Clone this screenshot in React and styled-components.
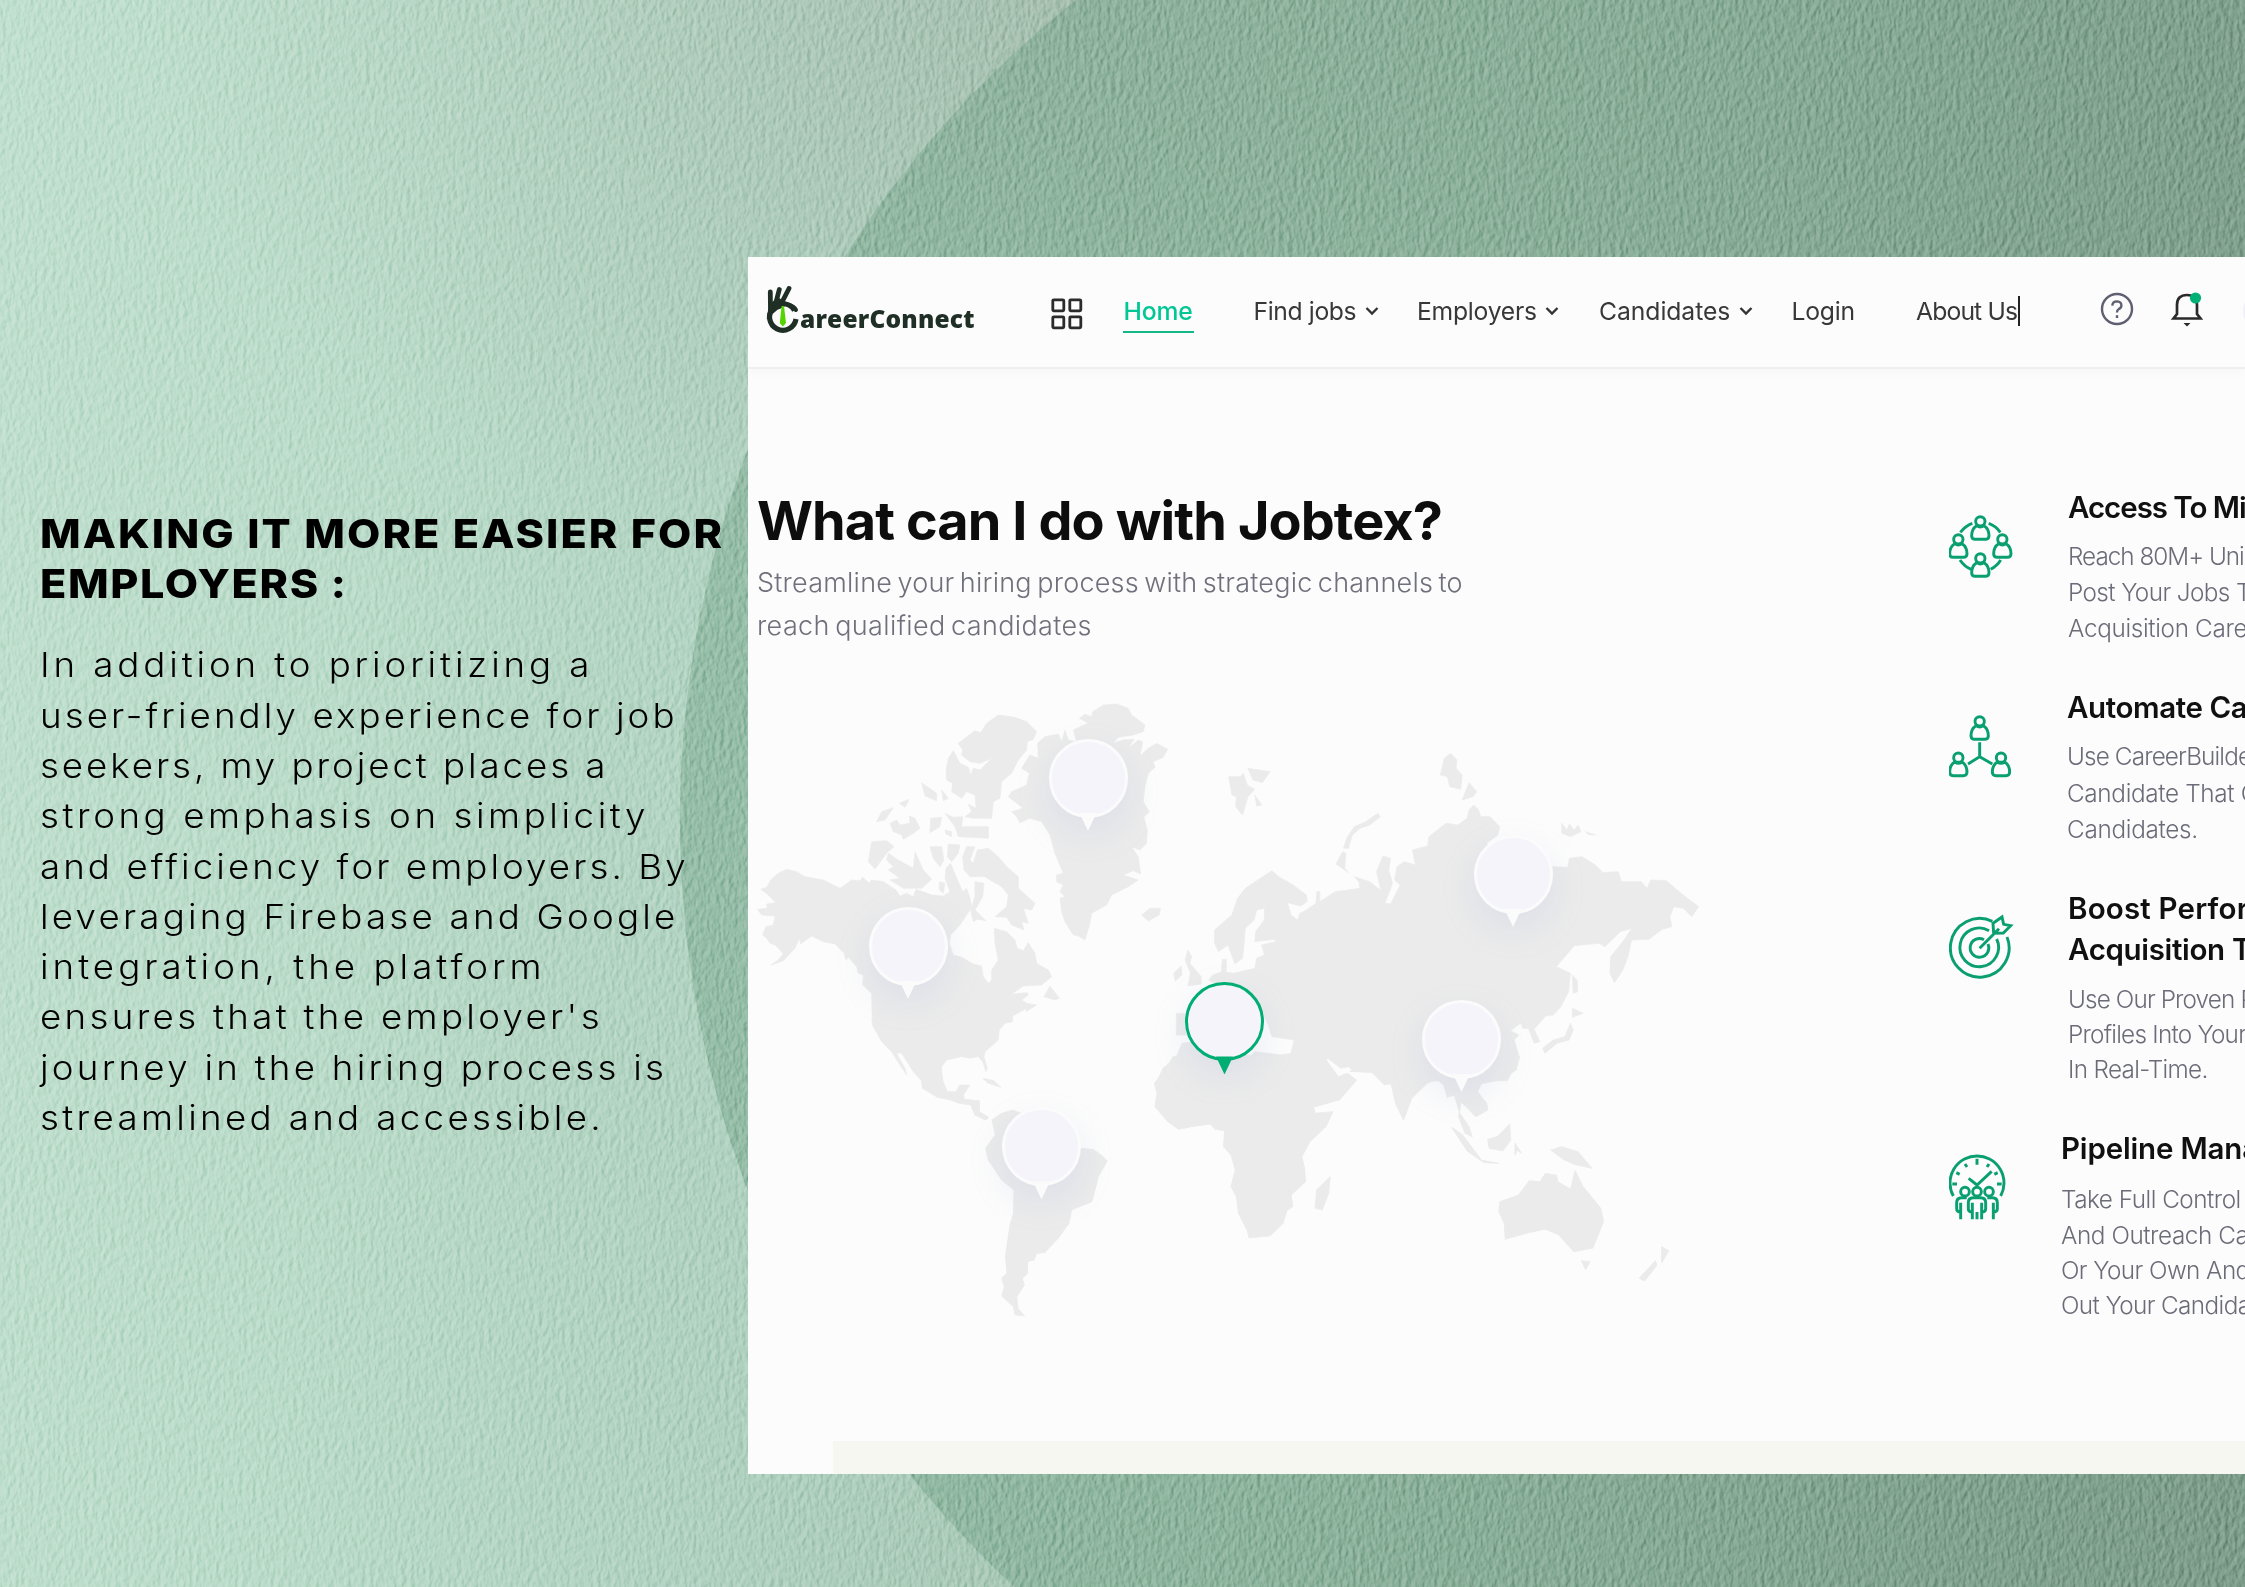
import React, { useLayoutEffect, useRef, useState } from "react";
import styled, { createGlobalStyle } from "styled-components";

const GlobalStyle = createGlobalStyle`
  *, *::before, *::after { box-sizing: border-box; }
  html, body { margin: 0; padding: 0; }
  body { overflow: hidden; background: #b4d6c3; }
`;

const sans = `Inter, "Liberation Sans", sans-serif`;
const green = "#00ad73";

/* ---------- page ---------- */

const Page = styled.div`
  position: relative;
  isolation: isolate;
  width: 2245px;
  height: 1587px;
  overflow: hidden;
  display: grid;
  grid-template-columns: 748px 1fr;
  font-family: ${sans};
  background:
    radial-gradient(circle at 1727px 820px,
      rgba(108, 158, 130, 0.42) 0, rgba(108, 158, 130, 0.42) 1046.5px, transparent 1047.5px),
    radial-gradient(900px 600px at 1050px 0px, rgba(150, 160, 148, 0.3), transparent),
    linear-gradient(97deg, #c0dfce 0%, #badbc9 18%, #b0d1c0 36%, #a2c1ae 60%, #8fa698 85%, #889c8f 100%);
`;

const Plaster = styled.svg`
  position: absolute;
  inset: 0;
  z-index: -1;
  width: 100%;
  height: 100%;
  mix-blend-mode: soft-light;
  opacity: 0.5;
`;

const Pitch = styled.section`
  padding: 508.6px 0 0 40px;
`;

const PitchTitle = styled.h1`
  margin: 0 0 31px;
  font-size: 40.3px;
  line-height: 50.3px;
  font-weight: 800;
  color: #000;
  transform: scaleX(1.07);
  transform-origin: left;
`;

const PitchText = styled.p`
  margin: 0;
  font-size: 34px;
  line-height: 50.33px;
  font-weight: 340;
  color: #000;
  transform: scaleX(1.08);
  transform-origin: left;
`;

const LineBox = styled.span`
  display: block;
  white-space: nowrap;
`;

const Ink = styled.span`
  display: inline-block;
`;

/* Justifies one line to a fixed measure by adjusting its tracking. */
function Line({ width, children }) {
  const ref = useRef(null);
  const [tracking, setTracking] = useState(0);
  useLayoutEffect(() => {
    const el = ref.current;
    const natural = el.offsetWidth;
    setTracking((width - natural) / Math.max(1, children.length - 1));
  }, [width, children]);
  return (
    <LineBox>
      <Ink ref={ref} style={{ letterSpacing: `${tracking}px` }}>{children}</Ink>
    </LineBox>
  );
}

/* ---------- window ---------- */

const Window = styled.main`
  margin-top: 257px;
  height: 1217px;
  background: #fcfcfc;
  overflow: hidden;
  display: flex;
  flex-direction: column;
`;

const Header = styled.header`
  flex: none;
  height: 112px;
  padding: 0 0 3px 19px;
  display: flex;
  align-items: center;
  border-bottom: 2px solid #efefef;
  box-shadow: 0 4px 10px rgba(0, 0, 0, 0.025);
`;

const Logo = styled.div`
  display: flex;
  width: 208px;
  height: 50px;
  flex: none;
  margin: -1px 0 0 -1px;
`;

const LogoMark = styled.svg`
  width: 34px;
  height: 50px;
  flex: none;
`;

const LogoText = styled.div`
  padding-top: 16px;
  font: 800 24.5px/36px "Open Sans", "Noto Sans", sans-serif;
  color: #1f2f25;
`;

const GridIcon = styled.svg`
  width: 32px;
  height: 32px;
  flex: none;
  margin: 7px 0 0 77px;
`;

const NavItem = styled.a`
  flex: none;
  position: relative;
  width: ${(p) => p.$w}px;
  margin-left: ${(p) => p.$gap}px;
  font-size: 24.7px;
  line-height: 30px;
  font-weight: ${(p) => (p.$active ? 500 : 400)};
  color: ${(p) => (p.$active ? "#00c795" : "#383838")};
  &::after {
    content: "";
    display: ${(p) => (p.$active ? "block" : "none")};
    position: absolute;
    left: -0.5px;
    right: -0.5px;
    top: 35px;
    height: 2.4px;
    background: #12b886;
  }
`;

const Chevron = styled.svg`
  flex: none;
  width: 14px;
  height: 10px;
  margin: 1px 0 0 8px;
`;

const Caret = styled.i`
  width: 2px;
  height: 30px;
  background: #222;
  flex: none;
`;

const HelpIcon = styled.svg`
  flex: none;
  width: 34px;
  height: 34px;
  margin: -4px 0 0 80px;
`;

const BellIcon = styled.svg`
  flex: none;
  width: 34px;
  height: 40px;
  margin: -3px 0 0 36px;
`;

const Avatar = styled.div`
  flex: none;
  width: 40px;
  height: 40px;
  margin-left: 38.5px;
  border-radius: 50%;
  background: #f1f0f9;
`;

const Body = styled.div`
  flex: 1;
  display: flex;
  min-height: 0;
`;

const Story = styled.section`
  flex: none;
  width: 1201px;
  padding-top: 119.7px;
`;

const Title = styled.h2`
  margin: 0 0 9.5px 9px;
  font-size: 54px;
  line-height: 64px;
  font-weight: 660;
  color: #0d0d0d;
`;

const Lead = styled.p`
  margin: 0 0 42.6px 9px;
  font-size: 27px;
  line-height: 42.6px;
  font-weight: 360;
  word-spacing: -2.5px;
  color: #70707c;
`;

const MapBoard = styled.div`
  position: relative;
  width: 980px;
  height: 640px;
`;

const MapShape = styled.svg`
  display: block;
  width: 980px;
  height: 640px;
  fill: #ebebeb;
  stroke: #ebebeb;
  stroke-width: 2;
  stroke-linejoin: round;
`;

const PinBox = styled.div`
  position: absolute;
  left: ${(p) => p.$x - 39.5}px;
  top: ${(p) => p.$y - 39}px;
  width: 79px;
  height: 79px;
  border-radius: 50%;
  background: #f5f4fb;
  border: ${(p) => (p.$active ? "3.5px solid " + green : "3.5px solid #fbfbfc")};
  box-shadow: 0 14px 34px rgba(155, 170, 220, 0.18);
  &::after {
    content: "";
    position: absolute;
    left: 50%;
    top: 71px;
    width: 17px;
    height: 18px;
    margin-left: -8.5px;
    background: ${(p) => (p.$active ? green : "#fbfbfc")};
    clip-path: polygon(0 0, 100% 0, 80% 40%, 50% 100%, 20% 40%);
  }
`;

const Features = styled.section`
  flex: 1;
  min-width: 0;
  overflow: hidden;
  padding-top: 117.6px;
`;

const Feature = styled.article`
  display: flex;
  gap: ${(p) => p.$gap}px;
  margin-bottom: 40.8px;
`;

const FeatureIcon = styled.svg`
  flex: none;
  width: ${(p) => p.$w}px;
  height: 64px;
  margin-top: 28px;
  fill: none;
  stroke: #0a9f70;
  stroke-width: 8.8;
  overflow: visible;
`;

const FeatureTitle = styled.h3`
  margin: 0 0 ${(p) => p.$gap}px;
  font-size: 29.5px;
  line-height: 41px;
  font-weight: 630;
  color: #101010;
`;

const FeatureText = styled.p`
  margin: 0;
  font-size: 24.3px;
  line-height: ${(p) => p.$lh}px;
  font-weight: 360;
  color: #6c6c79;
`;

const FooterStrip = styled.div`
  flex: none;
  height: 33px;
  margin-left: 85px;
  background: #f6f7f1;
`;

/* ---------- drawings ---------- */

const PersonShape = ({ x, y }) => (
  <g transform={`translate(${x} ${y})`}>
    <circle r="14" />
    <path d="M-11 13C-22 20-26 31-26 43Q-26 54-15 54H15Q26 54 26 43C26 31 22 20 11 13Q0 21-11 13" />
  </g>
);

const TeamIcon = () => (
  <FeatureIcon $w={63} viewBox="0 0 189 192">
    <PersonShape x={94} y={19} />
    <PersonShape x={28} y={73} />
    <PersonShape x={160} y={73} />
    <PersonShape x={94} y={130} />
    <path d="M34 52Q50 32 70 25M119 25Q141 33 154 52M33 135Q46 155 67 163M155 135Q145 152 125 163" />
  </FeatureIcon>
);

const NetworkIcon = () => (
  <FeatureIcon $w={62} viewBox="0 0 186 192">
    <PersonShape x={92} y={19} />
    <PersonShape x={28} y={128} />
    <PersonShape x={156} y={128} />
    <path d="M92 82V125L57 147M92 125L130 147" />
  </FeatureIcon>
);

const TargetIcon = () => (
  <FeatureIcon $w={63} viewBox="0 0 189 192">
    <path d="M130 16A88 88 0 1 0 174 63" />
    <path d="M120 44A58 58 0 1 0 143 69" />
    <path d="M105 71A28 28 0 1 0 117 84" />
    <path d="M92 97L150 38M134 52L132 22L159 3L164 25L185 29L163 51Z" />
  </FeatureIcon>
);

const PipelineIcon = () => (
  <FeatureIcon $w={56} viewBox="0 0 168 192">
    <path d="M13 120A81 81 0 1 1 155 120" />
    <path d="M84 8V26M48 24L54 33M120 24L114 33M22 50L32 55M146 50L136 55M10 84H24M144 84H158" />
    <path d="M59 67L84 87L128 46" />
    <circle cx="48" cy="107" r="13" />
    <circle cx="84" cy="107" r="13" />
    <circle cx="120" cy="107" r="13" />
    <path d="M35 190V140M35 168Q23 168 23 158V140Q23 125 38 125H53M133 190V140M133 168Q145 168 145 158V140Q145 125 130 125H115" />
    <path d="M70 190V140M98 190V140M70 168Q58 168 58 158V140Q58 125 73 125H95Q110 125 110 140V158Q110 168 98 168M84 168V190" />
  </FeatureIcon>
);

const northAmerica = [
  "M140 568L115 580L92 600L80 622L62 628L85 645L108 668L80 672L82 685L52 688L65 705L105 708L100 735L78 740L68 765L80 775L90 790L105 795L118 808L130 822L112 842L92 856L130 842L165 805L178 775L182 792L215 768L250 785L285 792L312 820L318 840L325 832L350 860L355 880L370 885L368 915L395 940L397 1035L425 1085L455 1115L470 1140L500 1185L495 1165L475 1130L470 1118L485 1120L520 1175L545 1202L605 1202L605 1160L620 1140L665 1130L690 1135L715 1130L728 1145L738 1175L742 1165L732 1130L735 1115L775 1080L778 1050L795 1030L818 1025L818 1008L860 985L858 995L890 975L860 970L845 960L865 945L862 938L815 943L850 918L905 915L935 890L925 870L890 850L885 820L865 788L850 812L832 805L825 780L800 755L763 745L765 790L775 840L755 870L755 900L745 910L730 890L725 858L700 852L665 832L640 825L628 790L632 765L660 735L690 690L695 680L690 655L680 625L668 635L655 605L640 570L632 550L618 565L615 595L630 635L610 648L575 645L540 632L528 628L520 650L500 640L480 648L468 630L430 605L395 600L388 610L368 592L360 602L335 600L300 625L250 600L195 590L170 575Z",
  "M655 190L705 152L722 158L740 130L775 105L825 112L860 125L890 155L880 178L862 185L860 210L835 240L815 280L785 305L780 355L760 365L755 415L700 415L675 410L695 395L685 372L708 385L705 345L680 335L665 355L635 335L638 310L620 300L618 270L625 235L640 212L660 250L685 262L692 285L700 265L720 270L755 235L720 250L690 245L665 225L668 210Z",
  "M1000 150L1020 140L1045 130L1018 115L1035 103L1055 110L1058 95L1090 75L1130 72L1165 85L1175 105L1215 135L1210 155L1180 165L1135 172L1120 190L1150 180L1182 178L1165 205L1195 180L1208 185L1200 228L1225 205L1250 190L1283 208L1270 232L1240 245L1245 262L1225 280L1215 320L1210 365L1228 395L1212 412L1222 450L1220 490L1200 510L1175 500L1195 530L1202 582L1180 572L1150 585L1195 600L1165 620L1115 645L1100 675L1055 700L1050 730L1035 780L1015 768L1000 765L975 725L965 695L960 655L975 650L960 635L970 615L950 605L950 585L970 580L945 520L930 465L905 425L870 415L840 428L830 410L815 395L850 385L805 350L815 335L860 315L868 280L845 265L870 225L895 235L893 190L915 170L955 162L965 185L975 150L985 180L1010 185Z",
  "M680 500L705 500L690 540L700 550L712 510L745 505L775 530L800 560L835 590L835 625L885 670L875 690L850 685L865 730L845 725L852 750L815 735L800 712L765 710L800 680L805 645L785 620L750 600L735 590L690 590L672 570L668 530Z",
  "M705 605L732 610L728 650L705 690L738 722L712 718L700 725L692 690L705 650Z",
  "M445 520L475 540L520 565L525 515L550 570L575 598L545 625L490 625L450 600L480 595L445 570L460 560L440 540Z",
  "M395 485L440 482L462 500L440 520L405 567L385 545Z",
  "M410 425L425 395L460 383L435 420ZM450 430L470 420L480 435L510 430L508 408L525 415L540 445L520 460L490 478L485 465L460 455ZM478 370L508 358L495 382ZM545 308L590 340L590 362L555 348ZM605 330L625 355L610 362Z",
  "M572 415L605 412L600 440L570 458ZM615 400L640 412L668 410L665 440L745 440L745 475L655 470L645 440ZM615 450L635 455L635 470L618 462ZM570 500L605 500L612 540L600 560L580 535ZM625 492L660 495L655 520L635 545L622 530ZM598 605L615 610L610 640L598 630Z",
  "M1205 705L1230 685L1262 685L1258 705L1225 723ZM930 918L958 955L945 960L912 950Z",
];

const eurasia = [
  "M345 572L362 590L400 615L435 645L437 665L420 678L385 668L395 705L412 720L418 700L435 690L460 670L462 635L470 635L470 665L510 635L575 625L572 605L560 590L600 605L630 632L618 575L635 528L655 535L650 570L660 610L640 670L655 672L680 615L665 600L672 560L690 545L720 555L712 510L752 498L755 470L800 430L830 435L855 415L860 390L872 375L885 390L890 410L915 410L940 440L935 465L905 490L980 560L1080 560L1118 562L1122 535L1155 530L1190 555L1210 578L1250 575L1258 605L1310 605L1325 625L1335 600L1375 602L1425 650L1460 680L1442 710L1420 685L1395 680L1385 710L1390 740L1365 748L1330 778L1285 780L1275 830L1262 870L1240 908L1228 880L1230 830L1265 780L1285 745L1255 755L1215 800L1200 790L1135 797L1088 860L1125 880L1120 935L1100 980L1080 1005L1060 1008L1030 1048L1045 1085L1030 1090L1015 1045L1000 1045L995 1030L968 1052L990 1065L978 1080L992 1135L960 1202L632 1202L610 1178L560 1175L545 1160L525 1165L490 1135L485 1145L520 1202L45 1202L60 1165L95 1130L110 1090L180 1080L240 1125L290 1130L300 1115L370 1125L395 1120L403 1080L345 1070L335 1035L320 1000L180 900L190 885L215 875L245 880L300 865L305 835L325 825L318 795L355 785L350 778L300 785L302 755L325 720L325 685L305 690L298 720L275 745L272 790L268 835L248 852L230 795L205 815L195 790L195 750L240 705L255 655L275 625Z",
  "M95 1000H125L135 1065H95ZM125 810L135 830L130 850L160 890L160 912L125 918L132 880L118 840ZM88 880L108 858L110 885L92 903ZM215 838L226 838L225 875L213 875Z",
  "M232 290L262 290L270 280L280 315L300 328L282 350L268 405L250 380L252 350L240 345ZM282 265L340 275L320 308L295 300ZM300 345L318 375L305 378Z",
  "M622 400L628 410L600 435L575 445L555 465L545 505L532 505L540 475L560 440L590 425ZM530 515L538 520L535 565L545 578L512 552Z",
  "M812 220L828 240L826 265L842 285L838 328L810 320L803 290L785 285L795 235ZM860 308L880 335L870 350L842 360Z",
  "M1102 430L1116 450L1122 432L1134 450L1145 436L1152 455L1125 470L1102 460ZM1165 455L1190 465L1172 464Z",
  "M1130 885L1142 900L1144 935L1132 940ZM1130 985L1158 1000L1130 1012ZM1125 1030L1132 1050L1122 1080L1090 1090L1058 1120L1052 1105L1080 1080L1110 1070Z",
];

const south = [
  "M30 340L40 360L42 385L70 412L90 418L110 430L132 435L140 465L160 480L165 472L148 455L148 422L120 418L118 405L130 375L112 375L105 395L88 395L80 365L78 340ZM155 355L175 362L188 382L165 370Z",
  "M172 480L190 460L210 450L222 458L240 460L335 565L360 568L375 585L387 603L370 650L358 725L320 750L315 790L295 835L270 878L255 880L250 900L238 905L238 940L228 955L232 975L218 1010L220 1045L232 1068L215 1065L212 1040L190 1008L195 980L190 955L200 940L197 890L205 800L212 760L213 690L190 660L165 600L160 565L178 525Z",
  "M510 290L495 330L475 370L480 400L476 440L500 485L520 508L545 500L580 492L588 508L606 512L604 560L618 585L626 630L618 680L628 710L632 760L648 810L652 834L690 828L715 790L722 752L733 740L730 705L757 665L755 625L750 590L765 545L795 500L808 455L775 460L772 442L820 420L852 360L835 340L818 350L795 300L700 285Z",
  "M840 335L880 335L905 375L917 372L925 430L940 480L955 415L985 368L1005 360L1015 375L1022 412L1035 405L1045 460L1062 500L1068 530L1055 520L1043 470L1047 425L1060 445L1075 470L1097 450L1095 430L1078 395L1085 372L1120 360L1150 330L1156 290L1100 250L900 250Z",
  "M1030 502L1050 525L1085 600L1118 610L1090 608L1060 575ZM1138 493L1140 540L1125 573L1100 565L1097 538L1115 530ZM1148 550L1160 580L1152 570L1148 585ZM1215 570L1235 560L1265 575L1292 625L1262 615L1240 600Z",
  "M1130 838L1128 790L1118 755L1120 725L1155 705L1175 662L1195 665L1205 640L1225 645L1228 665L1252 688L1260 632L1275 680L1308 745L1313 785L1293 865L1258 875L1230 825L1205 808L1170 820ZM1272 902L1288 905L1280 928ZM1422 860L1435 872L1422 908ZM1410 903L1413 915L1390 963L1380 955ZM803 650L800 700L788 750L775 745L778 690Z",
];

const pins = [
  { x: 340, y: 88 },
  { x: 160, y: 256 },
  { x: 476.5, y: 331.5, active: true },
  { x: 765, y: 184 },
  { x: 713.5, y: 349 },
  { x: 293.5, y: 456.5 },
];

const WorldMap = () => (
  <MapBoard>
    <MapShape viewBox="748 690 980 640">
      <g transform="translate(740 680) scale(.3333)">
        {northAmerica.map((d) => <path key={d} d={d} />)}
      </g>
      <g transform="translate(1140 680) scale(.38265 .3333)">
        {eurasia.map((d) => <path key={d} d={d} />)}
      </g>
      <g transform="translate(900 960) scale(.5357 .3333)">
        {south.map((d) => <path key={d} d={d} />)}
      </g>
    </MapShape>
    {pins.map((p) => <PinBox key={p.x} $x={p.x} $y={p.y} $active={p.active} />)}
  </MapBoard>
);

const Down = () => (
  <Chevron viewBox="0 0 14 10" fill="none" stroke="#333" strokeWidth="2.4">
    <path d="M1.5 2L7 7.5L12.5 2" />
  </Chevron>
);

const nav = [
  { label: "Home", w: 69.5, gap: 40.5, active: true },
  { label: "Find jobs", w: 103, gap: 60.5, menu: true },
  { label: "Employers", w: 120, gap: 38.5, menu: true },
  { label: "Candidates", w: 131.5, gap: 40, menu: true },
  { label: "Login", w: 63, gap: 39 },
  { label: "About Us", w: 102, gap: 61.5 },
];

const pitch = [
  ["In addition to prioritizing a", 508.5],
  ["user-friendly experience for job", 588],
  ["seekers, my project places a", 524],
  ["strong emphasis on simplicity", 561],
  ["and efficiency for employers. By", 597.5],
  ["leveraging Firebase and Google", 588],
  ["integration, the platform", 464],
  ["ensures that the employer's", 518.5],
  ["journey in the hiring process is", 578],
  ["streamlined and accessible.", 519],
];

const features = [
  {
    Icon: TeamIcon, gap: 56, titleGap: 10.2, lh: 36.2,
    title: [["Access To Mi", 178.5]],
    text: [["Reach 80M+ Uni", 177], ["Post Your Jobs T", 183], ["Acquisition Care", 180]],
  },
  {
    Icon: NetworkIcon, gap: 56, titleGap: 10.2, lh: 36.2,
    title: [["Automate Ca", 181]],
    text: [["Use CareerBuilde", 185], ["Candidate That C", 191], ["Candidates.", 131]],
  },
  {
    Icon: TargetIcon, gap: 56, titleGap: 12, lh: 35.3,
    title: [["Boost Perfor", 180], ["Acquisition T", 183]],
    text: [["Use Our Proven P", 188], ["Profiles Into Your", 179], ["In Real-Time.", 140]],
  },
  {
    Icon: PipelineIcon, gap: 56, titleGap: 13, lh: 35.3,
    title: [["Pipeline Mana", 198]],
    text: [["Take Full Control", 180], ["And Outreach Ca", 188], ["Or Your Own And", 189], ["Out Your Candida", 190]],
  },
];

export default function App() {
  return (
    <Page>
      <GlobalStyle />
      <Plaster aria-hidden="true">
        <filter id="plaster" x="0" y="0" width="100%" height="100%" colorInterpolationFilters="sRGB">
          <feTurbulence type="fractalNoise" baseFrequency="0.22 0.12" numOctaves="3" seed="7" />
          <feDiffuseLighting surfaceScale="1.4" diffuseConstant="1.06" lightingColor="#fff">
            <feDistantLight azimuth="200" elevation="30" />
          </feDiffuseLighting>
        </filter>
        <rect width="100%" height="100%" filter="url(#plaster)" />
      </Plaster>

      <Pitch>
        <PitchTitle>
          <Line width={637}>MAKING IT MORE EASIER FOR</Line>
          <Line width={286}>EMPLOYERS :</Line>
        </PitchTitle>
        <PitchText>
          {pitch.map(([t, w]) => <Line key={t} width={w}>{t}</Line>)}
        </PitchText>
      </Pitch>

      <Window>
        <Header>
          <Logo>
            <LogoMark viewBox="0 0 34 50" fill="none" stroke="#1f2f25" strokeLinecap="round">
              <path d="M28.5 25.5A13.3 13.3 0 1 0 30 34" strokeWidth="5.2" strokeLinecap="butt" />
              <path d="M4.5 26L4.3 7M9 21L13.3 4.5M14 21L23 3.5" strokeWidth="4.8" />
              <path d="M3 30L5 20L12 14L20 19L10 24Z" fill="#1f2f25" strokeWidth="3" />
              <path d="M22 20Q28 21 30 25" strokeWidth="4" />
              <path d="M15.6 21H18L20 38L16.8 41.5L13.8 38Z" fill="#55d400" stroke="none" />
            </LogoMark>
            <LogoText><Line width={175}>areerConnect</Line></LogoText>
          </Logo>
          <GridIcon viewBox="0 0 32 32" fill="none" stroke="#2b2b2b" strokeWidth="2.8">
            <rect x="1.8" y="1.8" width="11" height="11" rx="1" />
            <rect x="18.8" y="1.8" width="11" height="11" rx="1" />
            <rect x="1.8" y="18.8" width="11" height="11" rx="1" />
            <rect x="18.8" y="18.8" width="11" height="11" rx="1" />
          </GridIcon>
          {nav.map((n) => (
            <React.Fragment key={n.label}>
              <NavItem $w={n.w} $gap={n.gap} $active={n.active}>
                <Line width={n.w}>{n.label}</Line>
              </NavItem>
              {n.menu && <Down />}
            </React.Fragment>
          ))}
          <Caret />
          <HelpIcon viewBox="0 0 34 34" fill="none" stroke="#5f5f72" strokeWidth="2.4">
            <circle cx="17" cy="17" r="15" />
            <path d="M12.3 13.6Q12.6 9.4 17 9.4Q21.6 9.6 21.4 13.6Q21.2 16 18.6 17.2Q17 18.1 17 20.6" />
            <path d="M17 23.2V26" />
          </HelpIcon>
          <BellIcon viewBox="0 0 34 40" fill="none" stroke="#2b2b2b" strokeWidth="2.7">
            <path d="M3.5 29.5H30.5L27 25V16Q27 6 17 6Q7 6 7 16V25Z" />
            <path d="M13.5 34H20.5L17 37.5Z" fill="#2b2b2b" stroke="none" />
            <circle cx="25.5" cy="9" r="5.6" fill="#00b074" stroke="none" />
          </BellIcon>
          <Avatar />
        </Header>

        <Body>
          <Story>
            <Title><Line width={686}>What can I do with Jobtex?</Line></Title>
            <Lead>
              <Line width={706}>Streamline your hiring process with strategic channels to</Line>
              <Line width={334}>reach qualified candidates</Line>
            </Lead>
            <WorldMap />
          </Story>
          <Features>
            {features.map(({ Icon, ...f }) => (
              <Feature key={f.title[0][0]} $gap={f.gap}>
                <Icon />
                <div>
                  <FeatureTitle $gap={f.titleGap}>
                    {f.title.map(([t, w]) => <Line key={t} width={w}>{t}</Line>)}
                  </FeatureTitle>
                  <FeatureText $lh={f.lh}>
                    {f.text.map(([t, w]) => <Line key={t} width={w}>{t}</Line>)}
                  </FeatureText>
                </div>
              </Feature>
            ))}
          </Features>
        </Body>
        <FooterStrip />
      </Window>
    </Page>
  );
}
